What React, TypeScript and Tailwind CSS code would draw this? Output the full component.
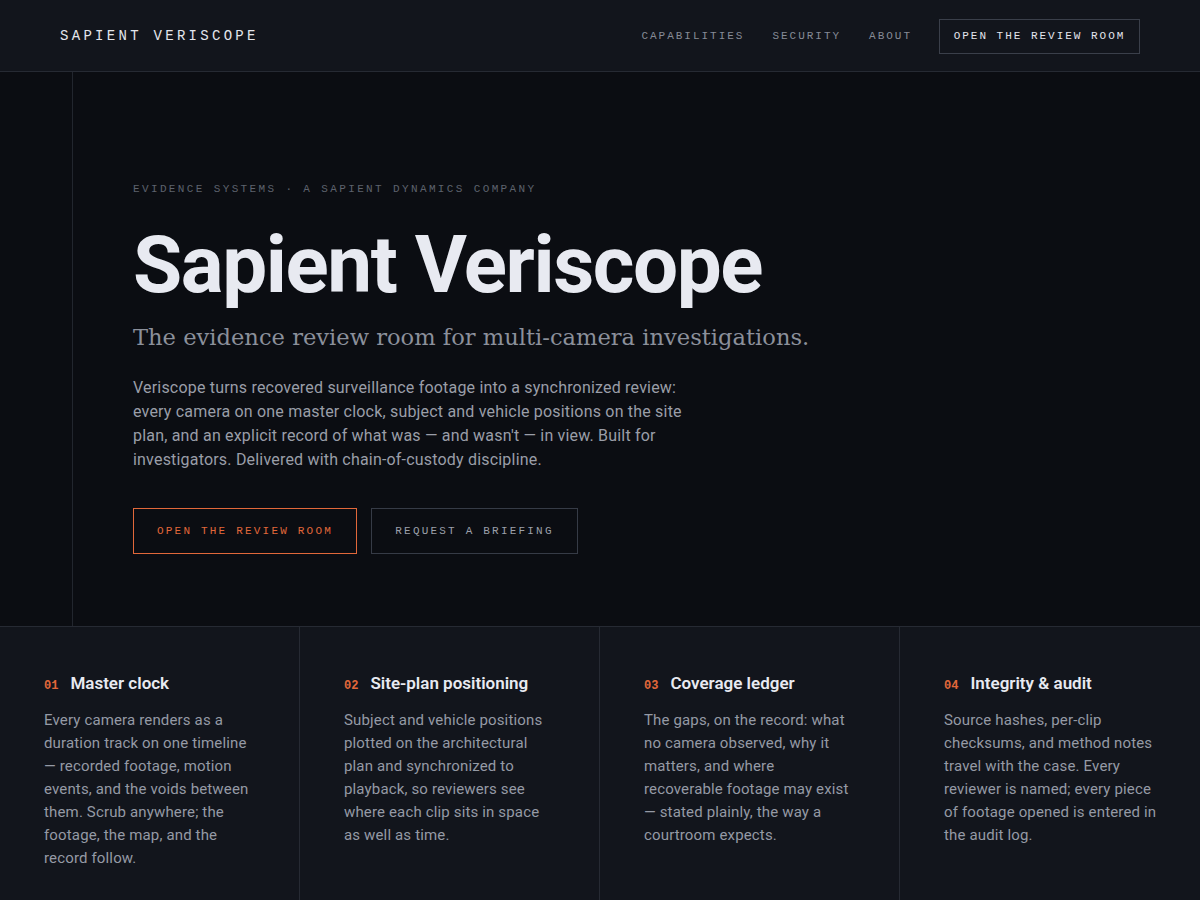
import React from 'react';

const mono = "font-['Liberation_Mono','DejaVu_Sans_Mono',monospace]";
const sans = "font-['Roboto','Liberation_Sans',sans-serif]";
const serif = "font-['DejaVu_Serif','Liberation_Serif',serif]";

const features = [
  {
    n: '01',
    title: 'Master clock',
    body: 'Every camera renders as a duration track on one timeline — recorded footage, motion events, and the voids between them. Scrub anywhere; the footage, the map, and the record follow.',
  },
  {
    n: '02',
    title: 'Site-plan positioning',
    body: 'Subject and vehicle positions plotted on the architectural plan and synchronized to playback, so reviewers see where each clip sits in space as well as time.',
  },
  {
    n: '03',
    title: 'Coverage ledger',
    body: 'The gaps, on the record: what no camera observed, why it matters, and where recoverable footage may exist — stated plainly, the way a courtroom expects.',
  },
  {
    n: '04',
    title: 'Integrity & audit',
    body: 'Source hashes, per-clip checksums, and method notes travel with the case. Every reviewer is named; every piece of footage opened is entered in the audit log.',
  },
];

export default function App() {
  return (
    <div className={`min-h-[900px] bg-[#0b0d12] ${sans}`}>
      <header className="h-[72px] bg-[#12151c] border-b border-[#262a33] flex items-center justify-between pl-[60px] pr-[60px]">
        <div className={`${mono} pt-[1px] text-[14px] tracking-[0.235em] text-[#e4e6ec]`}>SAPIENT VERISCOPE</div>
        <nav className={`${mono} flex items-center pt-[1px] text-[11px] tracking-[0.18em] text-[#868b96]`}>
          <a className="mr-[28px]">CAPABILITIES</a>
          <a className="mr-[28px]">SECURITY</a>
          <a className="mr-[27px]">ABOUT</a>
          <a className="h-[35px] w-[201px] flex items-center justify-center border border-[#3a3f4a] text-[#e4e6ec]">
            OPEN THE REVIEW ROOM
          </a>
        </nav>
      </header>

      <section className="flex h-[555px] bg-[#0b0d12] border-b border-[#262a33]">
        <div className="w-[73px] border-r border-[#22262e] shrink-0" />
        <div className="pl-[60px] pt-[110px]">
          <div className={`${mono} text-[11px] tracking-[0.215em] text-[#5d626d] leading-[14px]`}>
            EVIDENCE SYSTEMS · A SAPIENT DYNAMICS COMPANY
          </div>
          <h1 className="mt-[25px] text-[80px] leading-[88px] font-bold tracking-[-0.018em] text-[#e8eaf1]">
            Sapient Veriscope
          </h1>
          <p className={`${serif} mt-[13px] text-[22.6px] leading-[30px] text-[#8b909b]`}>
            The evidence review room for multi-camera investigations.
          </p>
          <p className="mt-[24px] w-[570px] text-[16px] leading-[24px] tracking-[0.012em] text-[#9a9ea8]">
            Veriscope turns recovered surveillance footage into a synchronized review: every camera on one master clock,
            subject and vehicle positions on the site plan, and an explicit record of what was — and wasn't — in view.
            Built for investigators. Delivered with chain-of-custody discipline.
          </p>
          <div className={`${mono} mt-[36px] flex gap-[14px] text-[11px] tracking-[0.2em]`}>
            <a className="h-[46px] w-[224px] flex items-center justify-center border border-[#e2683a] text-[#e2683a]">
              OPEN THE REVIEW ROOM
            </a>
            <a className="h-[46px] w-[207px] flex items-center justify-center border border-[#363b46] text-[#9ca0aa]">
              REQUEST A BRIEFING
            </a>
          </div>
        </div>
      </section>

      <section className="grid grid-cols-4 bg-[#12151c] h-[273px]">
        {features.map((f, i) => (
          <div
            key={f.n}
            className={`pl-[44px] pt-[44px] ${i < 3 ? 'border-r border-[#262a33]' : ''}`}
          >
            <div className="flex items-baseline gap-[12px]">
              <span className={`${mono} text-[12px] font-bold text-[#e2683a]`}>{f.n}</span>
              <span className="text-[17px] font-semibold text-[#e8eaf1]">{f.title}</span>
            </div>
            <p className="mt-[12px] w-[213px] text-[15px] leading-[23px] tracking-[0.01em] text-[#959aa5]">{f.body}</p>
          </div>
        ))}
      </section>
    </div>
  );
}
